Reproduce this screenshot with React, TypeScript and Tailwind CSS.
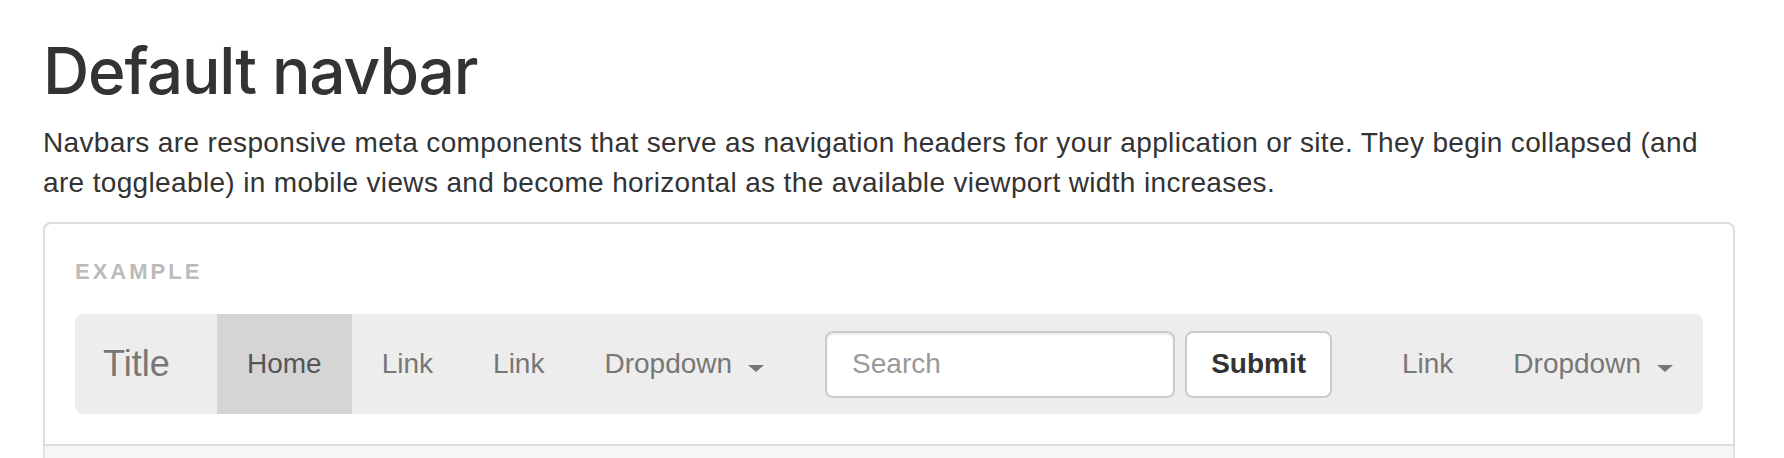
const font = { fontFamily: '"Liberation Sans", Arial, sans-serif' };

function Caret() {
  return (
    <span className="ml-[16px] mt-[8px] inline-block h-0 w-0 border-x-[8px] border-t-[7px] border-x-transparent border-t-[#777]" />
  );
}

function NavLink({ label, active, dropdown }: { label: string; active?: boolean; dropdown?: boolean }) {
  return (
    <a
      className={
        active
          ? "flex h-full items-center bg-[#d5d5d5] px-[30px] text-[#555]"
          : "flex h-full items-center px-[30px] text-[#777]"
      }
    >
      <span>{label}</span>
      {dropdown && <Caret />}
    </a>
  );
}

export default function App() {
  return (
    <div className="h-[458px] overflow-hidden bg-white pl-[43px] text-[#333]" style={font}>
      <div className="w-[1692px]">
        <h1 className="pt-[36px] font-['Inter',sans-serif] text-[64px] leading-[70px] font-medium tracking-[-1.1px]">
          Default navbar
        </h1>
        <p className="mt-[17px] text-[28px] leading-[40px] tracking-[0.35px]">
          Navbars are responsive meta components that serve as navigation headers for your application or site. They
          begin collapsed (and are toggleable) in mobile views and become horizontal as the available viewport width
          increases.
        </p>

        {/* Example box */}
        <div className="mt-[19px] rounded-t-[8px] border-2 border-[#ddd] px-[30px] pt-[36px] pb-[30px]">
          <div className="text-[22px] leading-[24px] font-bold tracking-[3px] text-[#bbb] uppercase">Example</div>

          <nav className="mt-[30px] flex h-[100px] items-center overflow-hidden rounded-[8px] bg-[#ededed] text-[28px]">
            <a className="flex h-full w-[142px] shrink-0 items-center pl-[28px] text-[36px] text-[#777]">Title</a>
            <NavLink label="Home" active />
            <NavLink label="Link" />
            <NavLink label="Link" />
            <NavLink label="Dropdown" dropdown />

            <form className="ml-[31px] flex items-center gap-[10px]">
              <input
                placeholder="Search"
                className="h-[67px] w-[350px] rounded-[8px] border-2 border-[#ccc] bg-white px-[25px] text-[28px] shadow-[inset_0_2px_2px_rgba(0,0,0,0.075)] outline-none placeholder:text-[#999]"
              />
              <button
                type="button"
                className="h-[67px] w-[147px] rounded-[8px] border-2 border-[#ccc] bg-white text-[28px] font-bold text-[#333]"
              >
                Submit
              </button>
            </form>

            <div className="ml-auto flex h-full items-center">
              <NavLink label="Link" />
              <NavLink label="Dropdown" dropdown />
            </div>
          </nav>
        </div>

        {/* Code block under the example */}
        <div className="h-[60px] border-x-2 border-[#e1e1e8] bg-[#f7f7f9]" />
      </div>
    </div>
  );
}
